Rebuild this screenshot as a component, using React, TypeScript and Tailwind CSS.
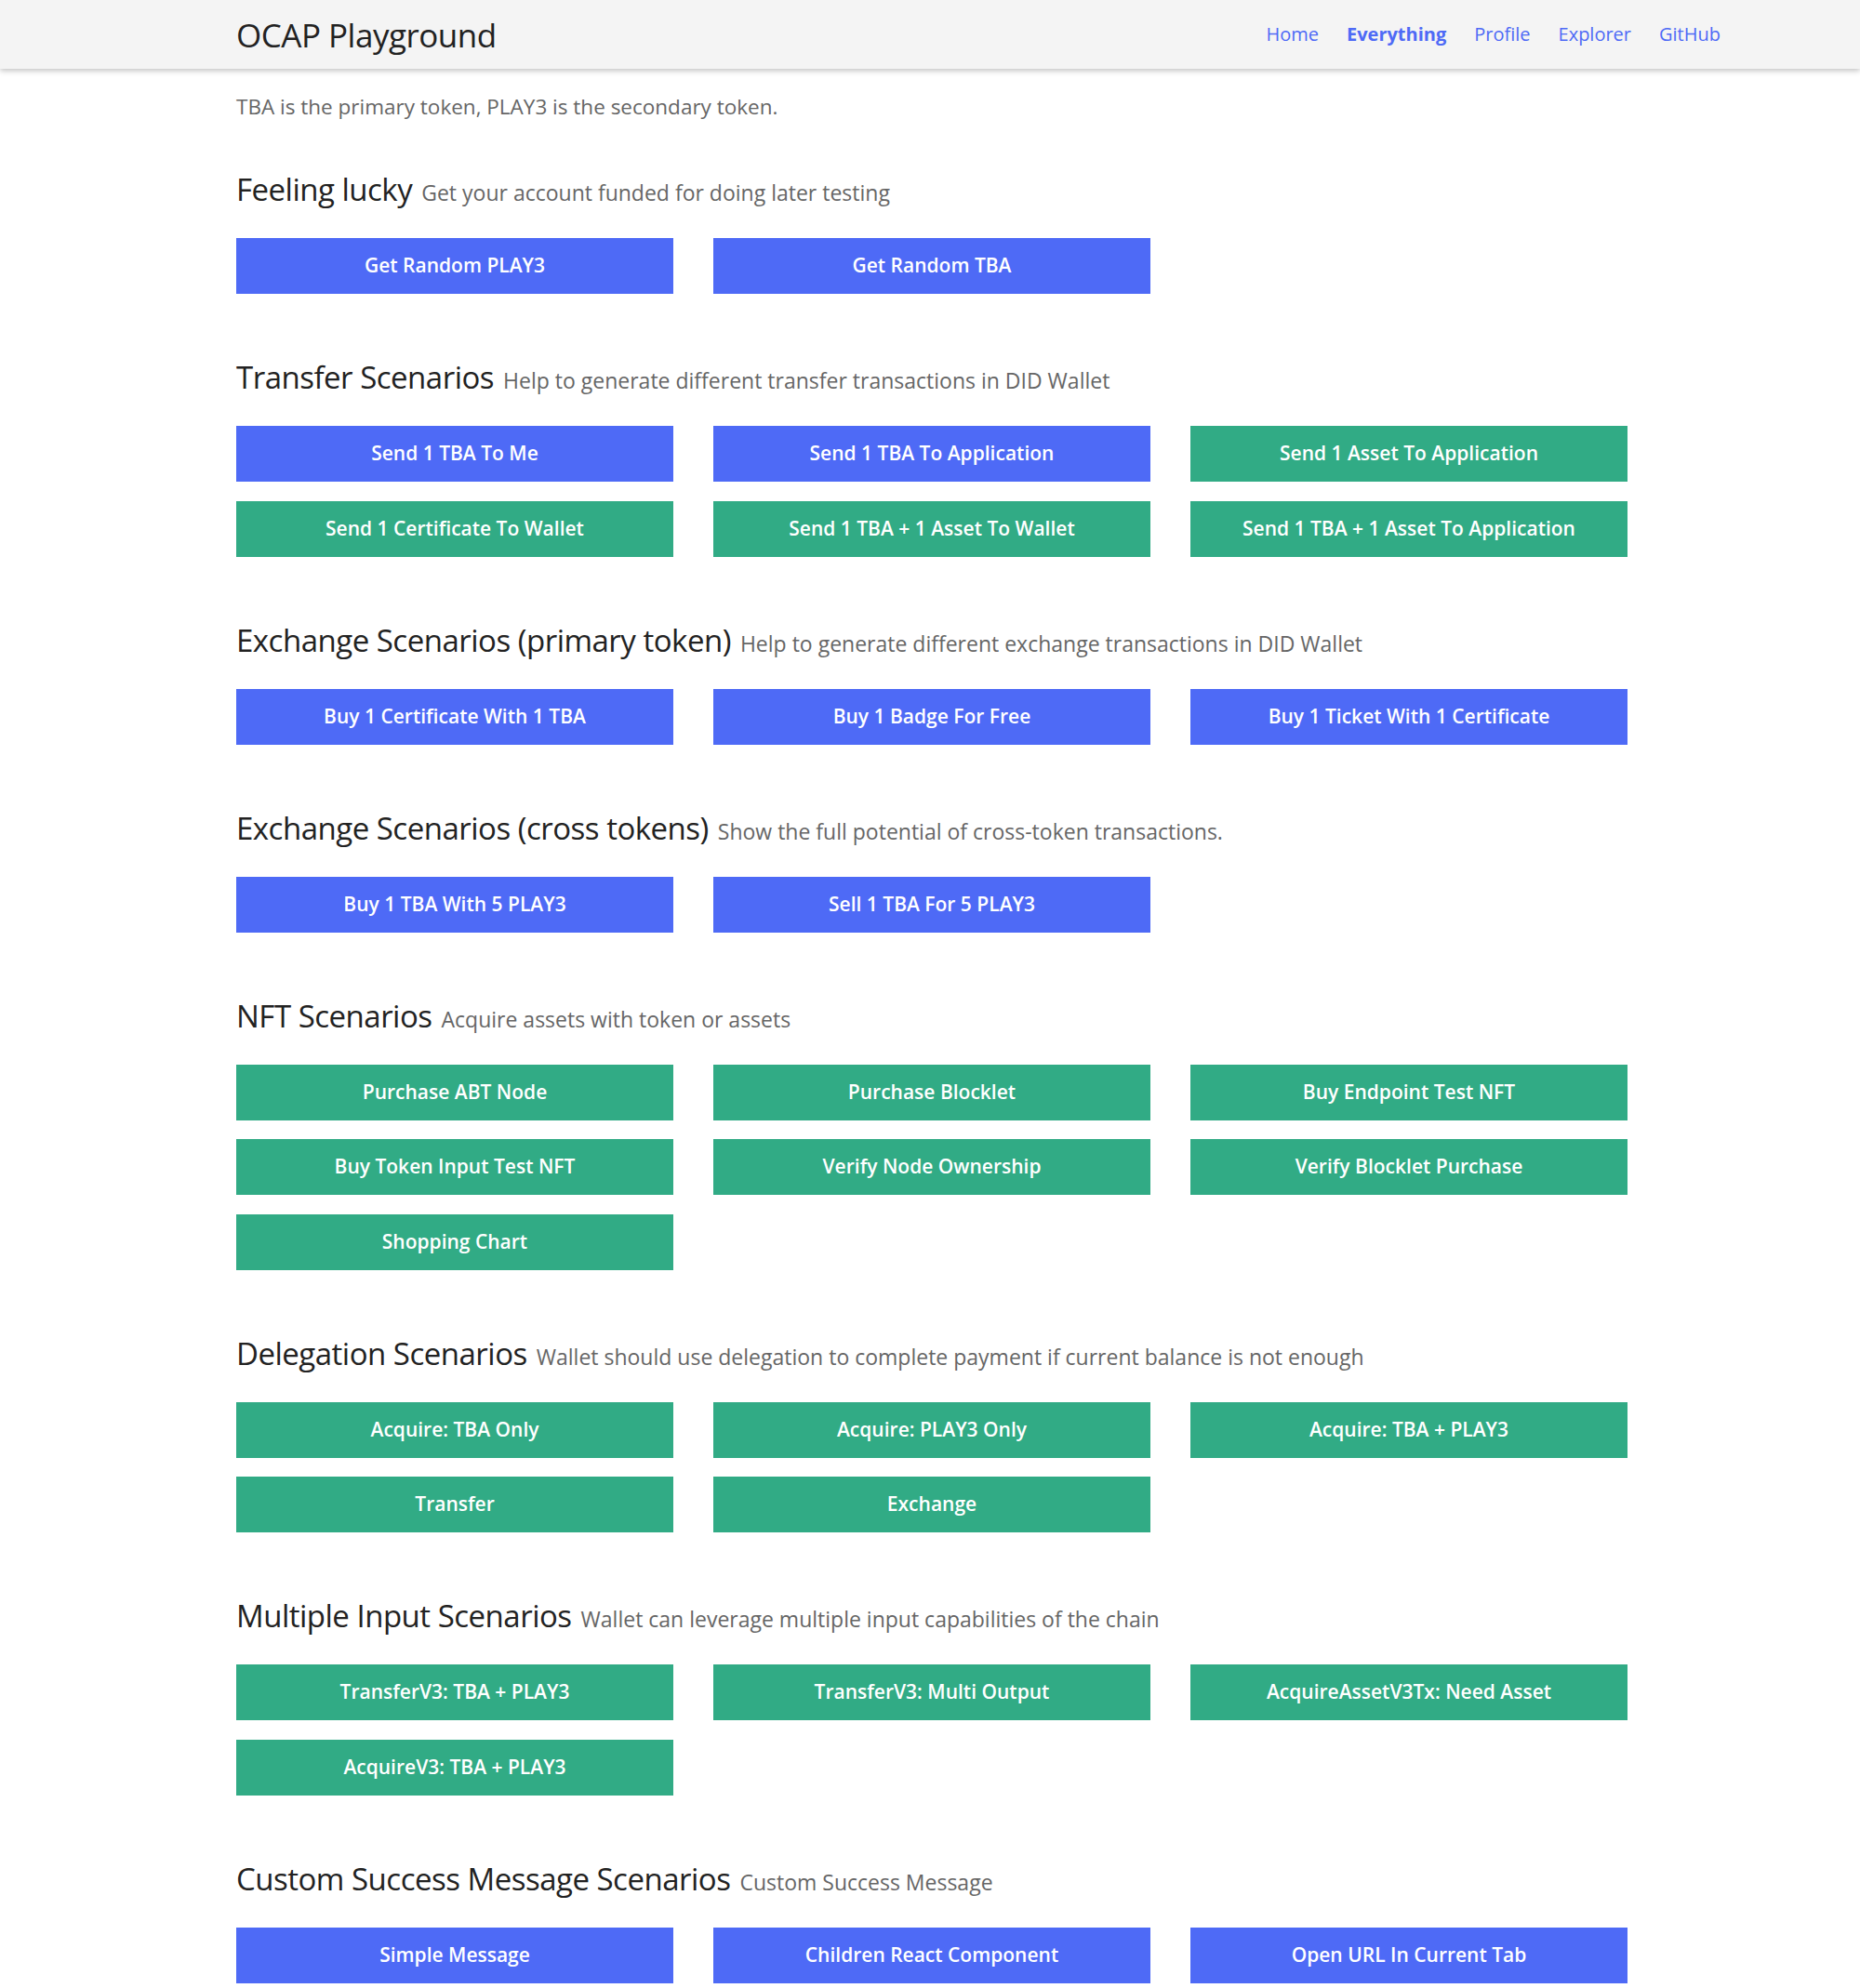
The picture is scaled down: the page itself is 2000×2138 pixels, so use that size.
const blue = 'bg-[#4e6af6]';
const green = 'bg-[#31ab85]';

type Btn = { label: string; color: 'blue' | 'green' };
type Section = { title: string; desc: string; buttons: Btn[] };

const b = (label: string): Btn => ({ label, color: 'blue' });
const g = (label: string): Btn => ({ label, color: 'green' });

const sections: Section[] = [
  {
    title: 'Feeling lucky',
    desc: 'Get your account funded for doing later testing',
    buttons: [b('Get Random PLAY3'), b('Get Random TBA')],
  },
  {
    title: 'Transfer Scenarios',
    desc: 'Help to generate different transfer transactions in DID Wallet',
    buttons: [
      b('Send 1 TBA To Me'),
      b('Send 1 TBA To Application'),
      g('Send 1 Asset To Application'),
      g('Send 1 Certificate To Wallet'),
      g('Send 1 TBA + 1 Asset To Wallet'),
      g('Send 1 TBA + 1 Asset To Application'),
    ],
  },
  {
    title: 'Exchange Scenarios (primary token)',
    desc: 'Help to generate different exchange transactions in DID Wallet',
    buttons: [b('Buy 1 Certificate With 1 TBA'), b('Buy 1 Badge For Free'), b('Buy 1 Ticket With 1 Certificate')],
  },
  {
    title: 'Exchange Scenarios (cross tokens)',
    desc: 'Show the full potential of cross-token transactions.',
    buttons: [b('Buy 1 TBA With 5 PLAY3'), b('Sell 1 TBA For 5 PLAY3')],
  },
  {
    title: 'NFT Scenarios',
    desc: 'Acquire assets with token or assets',
    buttons: [
      g('Purchase ABT Node'),
      g('Purchase Blocklet'),
      g('Buy Endpoint Test NFT'),
      g('Buy Token Input Test NFT'),
      g('Verify Node Ownership'),
      g('Verify Blocklet Purchase'),
      g('Shopping Chart'),
    ],
  },
  {
    title: 'Delegation Scenarios',
    desc: 'Wallet should use delegation to complete payment if current balance is not enough',
    buttons: [
      g('Acquire: TBA Only'),
      g('Acquire: PLAY3 Only'),
      g('Acquire: TBA + PLAY3'),
      g('Transfer'),
      g('Exchange'),
    ],
  },
  {
    title: 'Multiple Input Scenarios',
    desc: 'Wallet can leverage multiple input capabilities of the chain',
    buttons: [
      g('TransferV3: TBA + PLAY3'),
      g('TransferV3: Multi Output'),
      g('AcquireAssetV3Tx: Need Asset'),
      g('AcquireV3: TBA + PLAY3'),
    ],
  },
  {
    title: 'Custom Success Message Scenarios',
    desc: 'Custom Success Message',
    buttons: [b('Simple Message'), b('Children React Component'), b('Open URL In Current Tab')],
  },
];

export default function App() {
  return (
    <div className="min-h-screen bg-white font-['Segoe_UI','Open_Sans',sans-serif] text-[#222]">
      {/* Header */}
      <header className="h-[74px] bg-[#f4f4f4] shadow-[0_2px_6px_rgba(0,0,0,0.25)] relative z-10">
        <div className="h-full flex items-center justify-between pl-[254px] pr-[150px]">
          <span className="text-[35px] leading-none text-[#222] tracking-[-0.5px]">OCAP Playground</span>
          <nav className="flex items-center gap-[30px] text-[20px] text-[#4e6af6]">
            <a>Home</a>
            <a className="font-bold">Everything</a>
            <a>Profile</a>
            <a>Explorer</a>
            <a>GitHub</a>
          </nav>
        </div>
      </header>

      <main className="pl-[254px] pt-[26px]">
        <p className="text-[22.5px] leading-[30px] text-[#666]">
          TBA is the primary token, PLAY3 is the secondary token.
        </p>

        <div className="mt-[54px] flex flex-col gap-[70px]">
          {sections.map((s) => (
            <section key={s.title}>
              <h2 className="h-[40px] flex items-baseline gap-[10px] whitespace-nowrap">
                <span className="text-[33px] leading-[40px] text-[#222] tracking-[-0.5px]">{s.title}</span>
                <span className="text-[23px] text-[#666]">{s.desc}</span>
              </h2>
              <div className="mt-[32px] w-[1496px] grid grid-cols-3 gap-x-[43px] gap-y-[20.5px]">
                {s.buttons.map((btn) => (
                  <button
                    key={btn.label}
                    className={`h-[60px] text-white text-[21px] font-semibold ${btn.color === 'blue' ? blue : green}`}
                  >
                    {btn.label}
                  </button>
                ))}
              </div>
            </section>
          ))}
        </div>
        <div className="h-[6px]" />
      </main>
    </div>
  );
}
